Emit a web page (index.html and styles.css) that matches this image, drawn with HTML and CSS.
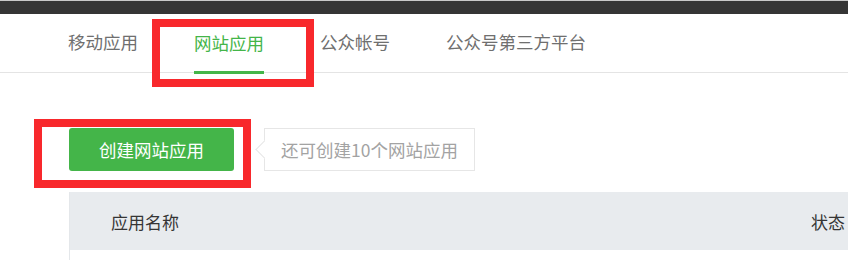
FILE: index.html
```html
<!DOCTYPE html>
<html lang="zh-CN">
<head>
<meta charset="utf-8">
<title>网站应用</title>
<link rel="stylesheet" href="styles.css">
</head>
<body>
<div class="page">
  <div class="topbar"></div>
  <nav class="tabs">
    <a class="tab">移动应用</a>
    <a class="tab active">网站应用</a>
    <a class="tab">公众帐号</a>
    <a class="tab">公众号第三方平台</a>
  </nav>
  <div class="content">
    <div class="actions">
      <button class="btn-create">创建网站应用</button>
      <div class="tip">还可创建10个网站应用</div>
    </div>
    <div class="table">
      <div class="thead">
        <span class="th">应用名称</span>
        <span class="th th-status">状态</span>
      </div>
      <div class="tbody"></div>
    </div>
  </div>
  <div class="mark mark-tab"></div>
  <div class="mark mark-btn"></div>
</div>
</body>
</html>
```
FILE: styles.css
```css
html, body {
  margin: 0;
  padding: 0;
  background: #fff;
}
body {
  font-family: "Noto Sans CJK SC", "Noto Sans", sans-serif;
  overflow: hidden;
}
.page {
  position: relative;
  width: 848px;
  height: 260px;
}
.topbar {
  height: 13px;
  background: #353535;
  border-top: 1px solid #c8c8c8;
}
.tabs {
  display: flex;
  gap: 56px;
  padding-left: 68px;
  border-bottom: 1px solid #e4e4e4;
  box-sizing: border-box;
  height: 59px;
}
.tab {
  display: flex;
  align-items: center;
  height: 58px;
  box-sizing: border-box;
  font-size: 17.5px;
  color: #6f6f6f;
  padding-bottom: 4px;
}
.tab.active {
  color: #44b549;
  border-bottom: 3px solid #44b549;
  padding-top: 3px;
  height: 60px;
}
.content {
  padding: 55px 0 0 69px;
}
.actions {
  display: flex;
  align-items: stretch;
  gap: 30px;
  height: 43px;
}
.btn-create {
  width: 165px;
  height: 43px;
  border: 0;
  border-radius: 3px;
  background: #44b549;
  color: #fff;
  font-family: inherit;
  font-size: 17.5px;
  padding: 0;
}
.tip {
  position: relative;
  display: flex;
  align-items: center;
  box-sizing: border-box;
  width: 211px;
  padding-left: 16px;
  border: 1px solid #e6e6e6;
  color: #a3a3a3;
  font-size: 17.5px;
  background: #fff;
}
.tip::before {
  content: "";
  position: absolute;
  left: -7px;
  top: 14px;
  width: 12px;
  height: 12px;
  background: #fff;
  border-left: 1px solid #e6e6e6;
  border-bottom: 1px solid #e6e6e6;
  transform: rotate(45deg);
}
.table {
  margin-top: 21px;
  border-left: 1px solid #e4e7ea;
}
.thead {
  display: flex;
  justify-content: space-between;
  align-items: center;
  height: 58px;
  background: #e8ebee;
  padding: 0 3px 0 41px;
}
.th {
  font-size: 17px;
  color: #353535;
}
.tbody {
  height: 12px;
}
.mark {
  position: absolute;
  border: 8px solid #f8282c;
  box-sizing: border-box;
}
.mark-tab {
  left: 152px;
  top: 19px;
  width: 162px;
  height: 68px;
}
.mark-btn {
  left: 34px;
  top: 119px;
  width: 217px;
  height: 69px;
}
```
